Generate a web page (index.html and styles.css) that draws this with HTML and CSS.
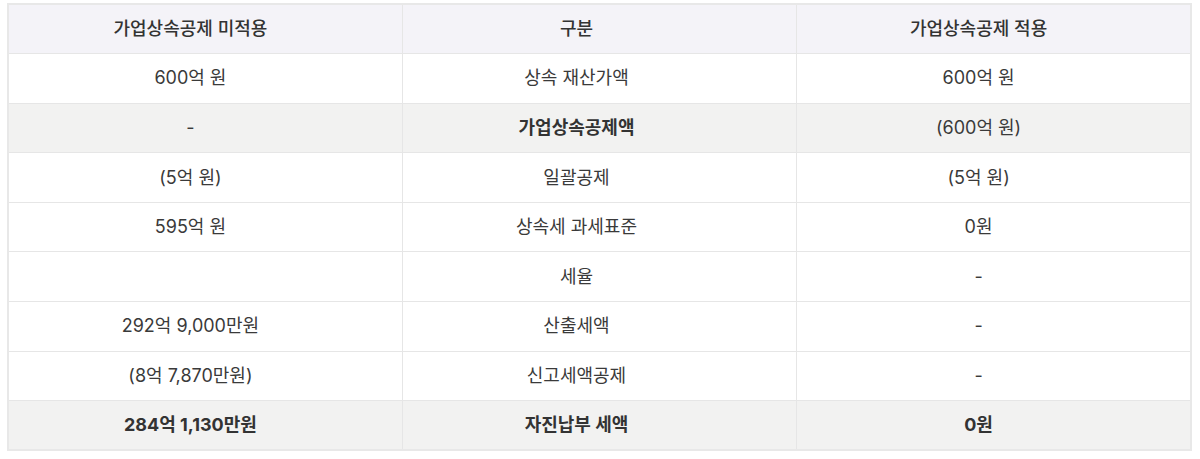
FILE: index.html
```html
<!DOCTYPE html>
<html lang="ko">
<head>
<meta charset="utf-8">
<link rel="stylesheet" href="styles.css">
</head>
<body>
<table class="tax">
  <thead>
    <tr><th>가업상속공제 미적용</th><th>구분</th><th>가업상속공제 적용</th></tr>
  </thead>
  <tbody>
    <tr><td>600억 원</td><td>상속 재산가액</td><td>600억 원</td></tr>
    <tr class="hl"><td>-</td><td class="b">가업상속공제액</td><td>(600억 원)</td></tr>
    <tr><td>(5억 원)</td><td>일괄공제</td><td>(5억 원)</td></tr>
    <tr><td>595억 원</td><td>상속세 과세표준</td><td>0원</td></tr>
    <tr><td></td><td>세율</td><td>-</td></tr>
    <tr><td>292억 9,000만원</td><td>산출세액</td><td>-</td></tr>
    <tr><td>(8억 7,870만원)</td><td>신고세액공제</td><td>-</td></tr>
    <tr class="hl total"><td>284억 1,130만원</td><td>자진납부 세액</td><td>0원</td></tr>
  </tbody>
</table>
</body>
</html>
```
FILE: styles.css
```css
html, body {
  margin: 0;
  padding: 0;
  background: #ffffff;
}
body {
  padding: 3px 7px 0 7px;
  font-family: Inter, "Noto Sans CJK KR", sans-serif;
  color: #333333;
}
.tax {
  width: 1185px;
  border-collapse: collapse;
  border: 2px solid #e8e8e8;
  table-layout: fixed;
}
.tax th, .tax td {
  border: 1px solid #e6e6e6;
  height: 49.6px;
  padding: 0 30px 0 0;
  text-align: center;
  vertical-align: middle;
  font-size: 18px;
  line-height: 22px;
  box-sizing: border-box;
}
.tax th:nth-child(2), .tax td:nth-child(2) {
  padding-right: 46px;
}
.tax th {
  background: #f4f3f8;
  font-weight: 500;
  color: #333333;
}
.tax td {
  font-weight: 400;
  color: #3a3a3a;
}
.tax tr.hl td {
  background: #f2f2f1;
}
.tax td.b, .tax tr.total td {
  font-weight: 700;
  color: #333333;
}
```
